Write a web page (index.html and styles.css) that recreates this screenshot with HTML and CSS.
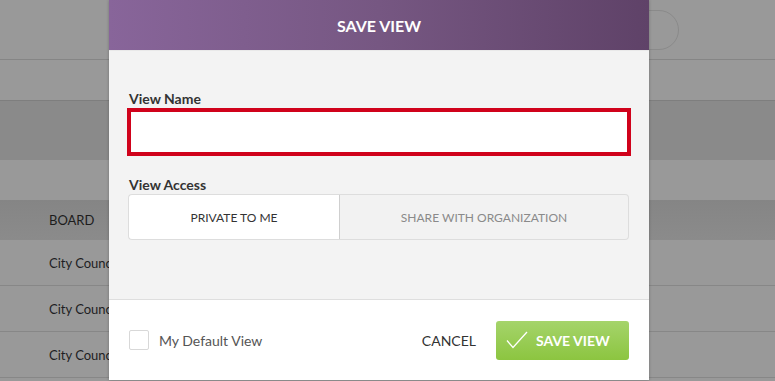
FILE: index.html
```html
<!DOCTYPE html>
<html>
<head>
<meta charset="utf-8">
<link rel="stylesheet" href="styles.css">
</head>
<body>
<div class="page">
  <div class="topbar"><div class="search"></div></div>
  <div class="bar"></div>
  <div class="band"></div>
  <div class="gap"></div>
  <div class="thead">BOARD</div>
  <div class="row">City Council</div>
  <div class="row">City Council</div>
  <div class="row">City Council</div>
</div>

<div class="modal">
  <div class="modal-head">SAVE VIEW</div>
  <div class="modal-body">
    <label class="field-label">View Name</label>
    <div class="name-input"></div>
    <label class="field-label access-label">View Access</label>
    <div class="toggle">
      <div class="seg seg-on">PRIVATE TO ME</div>
      <div class="seg seg-off">SHARE WITH ORGANIZATION</div>
    </div>
  </div>
  <div class="modal-foot">
    <div class="check-wrap">
      <span class="checkbox"></span>
      <span class="check-text">My Default View</span>
    </div>
    <div class="actions">
      <span class="cancel">CANCEL</span>
      <div class="save-btn">
        <svg class="tick" width="22" height="18" viewBox="0 0 22 18"><path d="M1 9.5 L7 16.5 L21 1" fill="none" stroke="#fff" stroke-width="1.3"/></svg>
        <span>SAVE VIEW</span>
      </div>
    </div>
  </div>
</div>
</body>
</html>
```

FILE: styles.css
```css
html, body {
  margin: 0;
  padding: 0;
}
body {
  width: 775px;
  height: 381px;
  overflow: hidden;
  background: #999999;
  font-family: Lato, "Open Sans", sans-serif;
  position: relative;
}
.page {
  display: flex;
  flex-direction: column;
}
.topbar {
  height: 59px;
  border-bottom: 1px solid #858585;
  display: flex;
  justify-content: flex-end;
  align-items: center;
  padding-right: 96px;
}
.search {
  width: 300px;
  height: 38px;
  border: 1px solid #8a8a8a;
  border-radius: 20px;
}
.bar {
  height: 40px;
  border-bottom: 1px solid #7e7e7e;
}
.band {
  height: 59px;
  background: #8a8a8a;
}
.gap {
  height: 40px;
}
.thead {
  height: 40px;
  background: linear-gradient(#858585, #8b8b8b);
  display: flex;
  align-items: center;
  padding-left: 49px;
  font-size: 13px;
  color: #1c1c1c;
}
.row {
  height: 45px;
  border-bottom: 1px solid #878787;
  display: flex;
  align-items: center;
  padding-left: 49px;
  font-size: 13px;
  color: #1e1e24;
}

.modal {
  position: absolute;
  left: 109px;
  top: 0;
  width: 540px;
  height: 380px;
  display: flex;
  flex-direction: column;
  box-shadow: 0 0 3px rgba(0,0,0,0.25);
}
.modal-head {
  height: 50px;
  background: linear-gradient(90deg, #88659a 0%, #765782 50%, #5f4268 100%);
  color: #ffffff;
  font-weight: 700;
  font-size: 16px;
  display: flex;
  align-items: center;
  justify-content: center;
}
.modal-body {
  height: 208px;
  background: #f3f3f3;
  border-top: 1px solid #e9e9e9;
  padding: 40px 18px 0 18px;
  display: flex;
  flex-direction: column;
}
.field-label {
  font-size: 14px;
  line-height: 16px;
  font-weight: 700;
  color: #333333;
  margin-left: 2px;
  margin-bottom: 1px;
}
.name-input {
  height: 40px;
  background: #ffffff;
  border: 4px solid #d0021b;
}
.access-label {
  margin-top: 21px;
}
.toggle {
  display: flex;
  height: 46px;
  margin: 0 2px 0 1px;
}
.seg {
  display: flex;
  align-items: center;
  justify-content: center;
  font-size: 12px;
  box-sizing: border-box;
  border: 1px solid #dddddd;
}
.seg-on {
  width: 212px;
  background: #ffffff;
  color: #333333;
  border-radius: 4px 0 0 4px;
  border-right: 1px solid #cfcfcf;
}
.seg-off {
  flex: 1;
  background: #f2f2f2;
  color: #8a8a8a;
  border-left: none;
  border-radius: 0 4px 4px 0;
}
.modal-foot {
  flex: 1;
  background: #ffffff;
  border-top: 1px solid #dedede;
  display: flex;
  align-items: center;
  justify-content: space-between;
  padding: 0 20px 0 20px;
}
.check-wrap {
  display: flex;
  align-items: center;
}
.checkbox {
  width: 18px;
  height: 18px;
  border: 1px solid #d8d8d8;
  border-radius: 2px;
  background: #fff;
}
.check-text {
  margin-left: 10px;
  font-size: 14px;
  color: #555555;
}
.actions {
  display: flex;
  align-items: center;
}
.cancel {
  font-size: 14px;
  color: #333333;
  margin-right: 20px;
}
.save-btn {
  width: 133px;
  height: 39px;
  box-sizing: border-box;
  border-radius: 3px;
  background: linear-gradient(#a5d46b, #8cc540);
  display: flex;
  align-items: center;
  padding-left: 10px;
  color: #ffffff;
  font-weight: 700;
  font-size: 14px;
}
.tick {
  margin-right: 8px;
}
```
